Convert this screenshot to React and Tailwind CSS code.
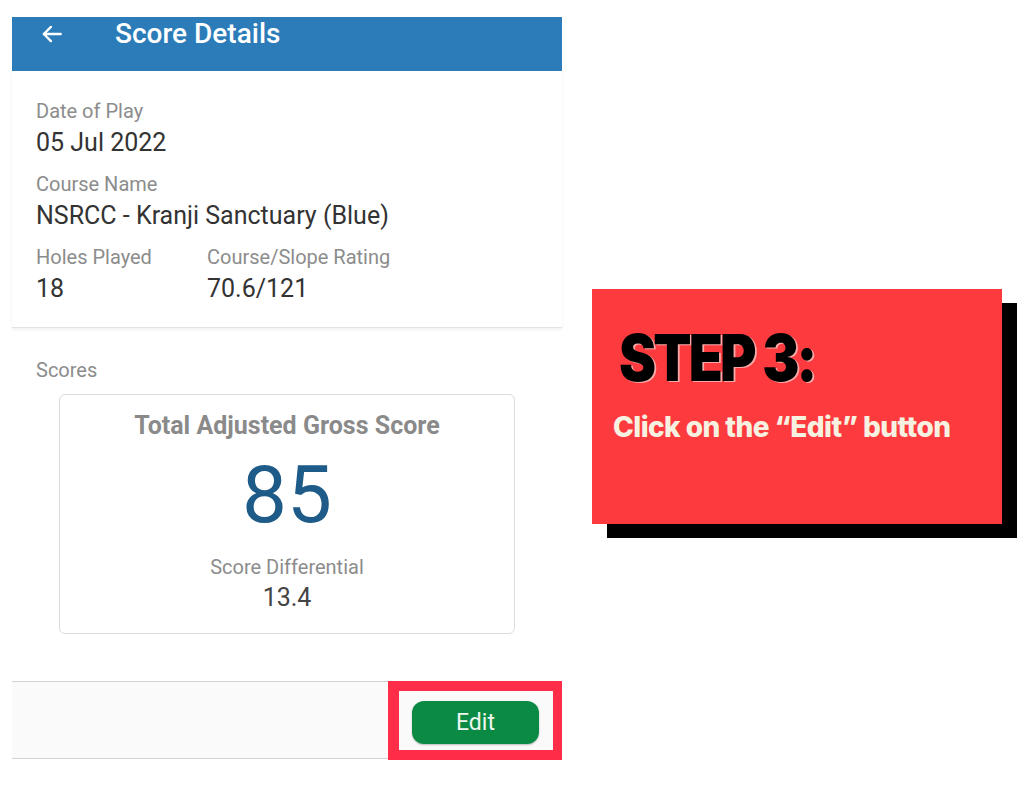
const roboto = { fontFamily: "Roboto, 'Liberation Sans', sans-serif" };
const display = { fontFamily: "Inter, 'DejaVu Sans', sans-serif" };

const BackArrow = () => (
  <svg width="26" height="26" viewBox="0 0 24 24" fill="none" stroke="white" strokeWidth="2.2" strokeLinecap="round" strokeLinejoin="round">
    <path d="M20 12H4.5" />
    <path d="M11 5.5L4.5 12l6.5 6.5" />
  </svg>
);

const Field = ({ label, value, className = "" }) => (
  <div className={className}>
    <div className="text-[20px] leading-[24px] text-[#8c8c8c]">{label}</div>
    <div className="mt-[6px] text-[25px] leading-[28px] text-[#333333]">{value}</div>
  </div>
);

const ScoreDetails = () => (
  <div className="w-[550px] mt-[17px] ml-[12px]" style={roboto}>
    <div className="h-[54px] bg-[#2b7cb9] flex items-center pl-[27px] pb-[20px]">
      <BackArrow />
      <span className="ml-[50px] text-white text-[28px] font-medium leading-none">Score Details</span>
    </div>

    <div className="pt-[28px] pb-[24px] pl-[24px] border-b border-[#e4e4e4] shadow-[0_2px_3px_rgba(0,0,0,0.06)]">
      <Field label="Date of Play" value="05 Jul 2022" />
      <Field label="Course Name" value="NSRCC - Kranji Sanctuary (Blue)" className="mt-[15px]" />
      <div className="flex mt-[15px]">
        <Field label="Holes Played" value="18" className="w-[171px]" />
        <Field label="Course/Slope Rating" value="70.6/121" />
      </div>
    </div>

    <div className="pt-[30px] pl-[24px] text-[20px] leading-[24px] text-[#8c8c8c]">Scores</div>

    <div className="mx-[47px] mt-[12px] h-[240px] rounded-[6px] border border-[#dcdcdc] flex flex-col items-center">
      <div className="mt-[16px] text-[25px] leading-[30px] font-bold text-[#8a8a8a]">Total Adjusted Gross Score</div>
      <div className="mt-[9px] text-[80px] leading-[90px] text-[#1e5b88]">85</div>
      <div className="mt-[15px] text-[20px] leading-[24px] text-[#8c8c8c]">Score Differential</div>
      <div className="mt-[5px] text-[25px] leading-[28px] text-[#444444]">13.4</div>
    </div>

    <div className="mt-[47px] h-[78px] bg-[#fafafa] border-t border-b border-[#d2d2d2] flex justify-end">
      <div className="w-[174px] -mt-px h-[79px] border-[10px] border-l-[11px] border-r-[9px] border-[#ff2d48] flex items-start pt-[10px] pl-[13px]">
        <button className="w-[127px] h-[43px] rounded-[12px] bg-[#0b8a44] text-[#eef7f0] text-[23px] leading-none shadow-[0_1px_2px_rgba(0,0,0,0.25)]">
          Edit
        </button>
      </div>
    </div>
  </div>
);

const StepCard = () => (
  <div className="ml-[30px] mt-[289px] w-[410px] h-[235px] bg-[#fd3b3e] shadow-[15px_14px_0_#000000] pl-[27px] pt-[37px]">
    <div
      className="origin-left scale-x-[0.87] text-[64px] leading-[64px] font-black text-black tracking-[-0.05em] [text-shadow:2px_1px_0_#f7aaa8]"
      style={display}
    >
      STEP 3:
    </div>
    <div
      className="mt-[20px] -ml-[6px] text-[28px] leading-[34px] font-extrabold text-[#f7f1e1] tracking-[-0.02em]"
      style={display}
    >
      Click on the “Edit” button
    </div>
  </div>
);

export default function App() {
  return (
    <div className="w-[1024px] h-[791px] bg-white flex items-start overflow-hidden">
      <ScoreDetails />
      <StepCard />
    </div>
  );
}
